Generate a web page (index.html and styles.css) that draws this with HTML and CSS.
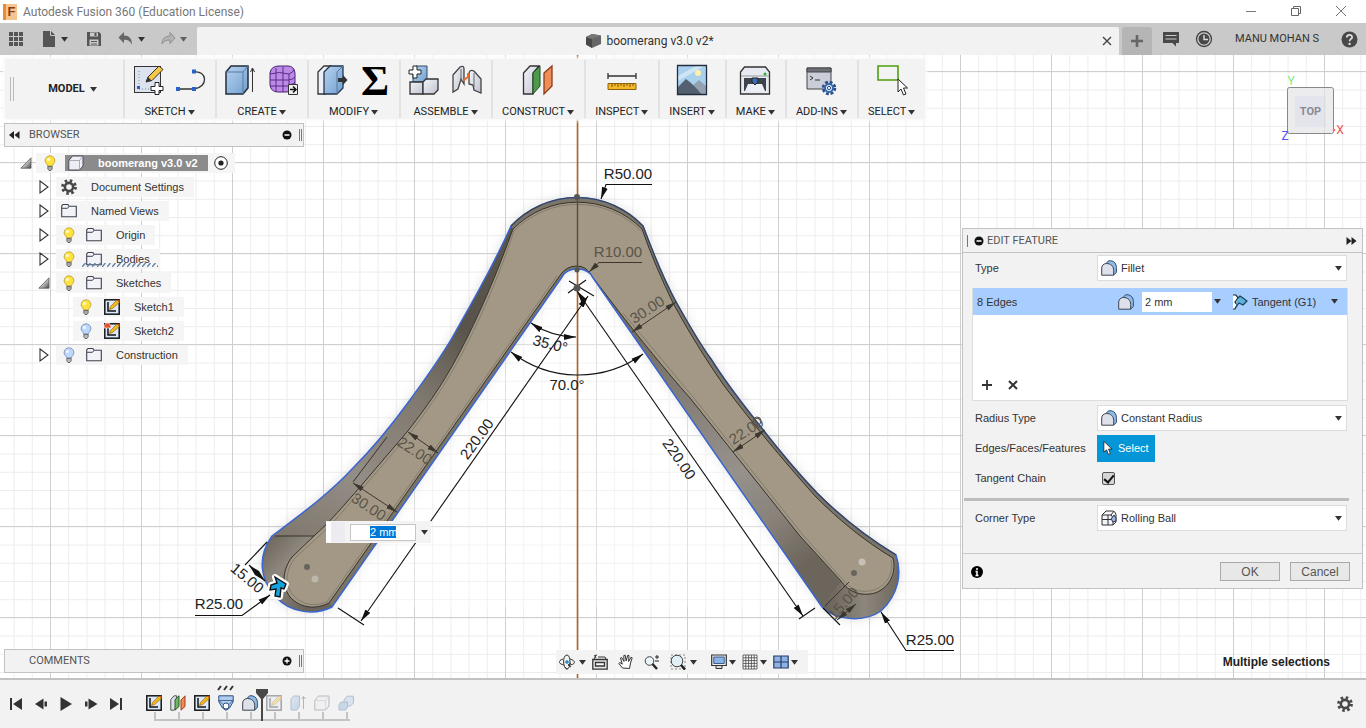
FILE: index.html
```html
<!DOCTYPE html>
<html lang="en">
<head>
<meta charset="utf-8">
<title>Autodesk Fusion 360 (Education License)</title>
<link rel="stylesheet" href="styles.css">
</head>
<body>
<svg class="defs" aria-hidden="true">
  <defs>
    <linearGradient id="blueFace" x1="0" y1="0" x2="1" y2="1"><stop offset="0" stop-color="#b9d3ef"/><stop offset="1" stop-color="#6f9fd0"/></linearGradient>
    <linearGradient id="greyFace" x1="0" y1="0" x2="1" y2="1"><stop offset="0" stop-color="#f4f5f9"/><stop offset="1" stop-color="#bfc3cf"/></linearGradient>
    <linearGradient id="triFill" x1="0" y1="0" x2="1" y2="1"><stop offset="0.3" stop-color="#fff"/><stop offset="1" stop-color="#444"/></linearGradient>
  </defs>
  <symbol id="caret" viewBox="0 0 8 8"><path d="M0 1h8L4 6.500z" fill="#333"/></symbol>
  <symbol id="bulb-on" viewBox="0 0 16 16"><path d="M8 .8a4.900 4.900 0 0 0-4.900 4.900c0 2.300 2.200 3.200 2.500 5.200h4.800c.3-2 2.500-2.900 2.500-5.200A4.900 4.900 0 0 0 8 .8z" fill="#ffe23c" stroke="#b59a3a" stroke-width=".8"/><circle cx="6.500" cy="4.500" r="1.600" fill="#fffbd0"/><path d="M5.800 11.500h4.400v2.300L9 15.500H7l-1.200-1.700z" fill="#aaa" stroke="#555" stroke-width=".8"/></symbol>
  <symbol id="bulb-off" viewBox="0 0 16 16"><path d="M8 .8a4.900 4.900 0 0 0-4.900 4.900c0 2.300 2.200 3.200 2.500 5.200h4.800c.3-2 2.500-2.900 2.500-5.200A4.900 4.900 0 0 0 8 .8z" fill="#bcd7fb" stroke="#6d86b0" stroke-width=".8"/><circle cx="6.500" cy="4.500" r="1.600" fill="#f0f7ff"/><path d="M5.800 11.500h4.400v2.300L9 15.500H7l-1.200-1.700z" fill="#bbb" stroke="#555" stroke-width=".8"/></symbol>
  <symbol id="folder" viewBox="0 0 16 16"><path d="M.7 13.800V3l1.200-1.500h5L8 3.300h7.300v10.500z" fill="#f2f3f8" stroke="#3e4250" stroke-width="1.100"/><path d="M1 5.300h5.500L8 3.500" fill="none" stroke="#3e4250"/></symbol>
  <symbol id="closed" viewBox="0 0 12 14"><path d="M2 1l8 6-8 6z" fill="#fff" stroke="#333" stroke-width="1.100"/></symbol>
  <symbol id="open" viewBox="0 0 12 12"><path d="M11 .8v10.400H.8z" fill="url(#triFill)" stroke="#555" stroke-width=".8"/></symbol>
  <symbol id="sketch" viewBox="0 0 16 16"><rect x=".8" y=".8" width="14.400" height="14.400" fill="#dce8f8" stroke="#151515" stroke-width="1.500"/><path d="M4 3v9h8" fill="none" stroke="#111" stroke-width="1.500"/><path d="M5.500 10.500l1-3L13 1l2.500 2.200-6.800 6.200z" fill="#f2b91e" stroke="#8a5a00" stroke-width=".6"/><path d="M13 1l2.500 2.200.4-2.400z" fill="#d8481e"/></symbol>
  <symbol id="plane" viewBox="0 0 16 16"><path d="M.8 4.500L4 .8h2.600v11L4 15.200H.8z" fill="#dfe2ec" stroke="#444" stroke-width=".9"/><path d="M5 4.500L9 .8v10.700l-4 3.700z" fill="#72b465" stroke="#245b24"/><path d="M11 5l4-4.200v10.700l-4 3.700z" fill="#ee8a55" stroke="#a2411c"/></symbol>
  <symbol id="loft" viewBox="0 0 16 16"><path d="M.8.8h14.400v6L11.500 13 8 15.400 4.500 13 .8 6.800z" fill="#aecdf0" stroke="#304f7c"/><path d="M1 5.500l4 4M15 5.500l-4 4M1 5.500h14" fill="none" stroke="#304f7c" stroke-width=".8"/><circle cx="8" cy="11" r="3" fill="#fff" stroke="#304f7c"/></symbol>
  <symbol id="fillet" viewBox="0 0 16 16"><path d="M5 3.500L7.500.8h2.800C13.500 1.500 15.400 4 15.400 7.500v5L12.700 15z" fill="#8ebbe8" stroke="#334d70"/><path d="M.7 15.200V8C.7 5.500 2.800 3.500 5.500 3.500c4.200 0 7.200 2.800 7.200 7v4.700z" fill="#dfe1ea" stroke="#3e4250"/></symbol>
  <symbol id="box" viewBox="0 0 16 16"><path d="M.8 15V5.500L4.500 1H15v10l-3.500 4z" fill="#edeff5" stroke="#4a4e5a"/><path d="M1 5.500h10.500V15M11.500 5.500L15 1" stroke="#8b90a0" fill="none" stroke-width=".7"/></symbol>
  <symbol id="combine" viewBox="0 0 16 16"><path d="M6 5l3-3.800h6.400V8L12.500 11H6z" fill="#a9c8ec" stroke="#41608d"/><path d="M1 9.500L3 7h6.500v5.500L7.500 15H1z" fill="#7ba3d4" stroke="#41608d"/></symbol>
  <symbol id="extrude" viewBox="0 0 16 16"><path d="M1 15V4l2.500-3h6v10L7 15z" fill="url(#blueFace)" stroke="#41608d"/><path d="M13.500 14V2M11.500 4l2-2.600 2 2.600" fill="none" stroke="#444"/></symbol>
  <symbol id="pointer" viewBox="0 0 12 18"><path d="M1 1v13l3.200-2.800 2.300 5.500 2.400-1-2.300-5.400h4.300z" fill="#fff" stroke="#222"/></symbol>
  <symbol id="gear" viewBox="0 0 16 16"><circle cx="8" cy="8" r="6.400" fill="none" stroke="#484848" stroke-width="3" stroke-dasharray="2.510 2.510"/><circle cx="8" cy="8" r="4.100" fill="none" stroke="#484848" stroke-width="2.600"/></symbol>
</svg>

<header class="titlebar">
  <span class="app-logo">F</span>
  <h1 class="app-title">Autodesk Fusion 360 (Education License)</h1>
  <div class="window-buttons">
    <button aria-label="Minimize"><svg width="12" height="12"><path d="M1 6.500h10" stroke="#777"/></svg></button>
    <button aria-label="Restore"><svg width="12" height="12"><path d="M1.500 3.500h7v7h-7zM3.500 3.500v-2h7v7h-2" fill="none" stroke="#666"/></svg></button>
    <button aria-label="Close"><svg width="12" height="12"><path d="M1 1l10 10M11 1L1 11" stroke="#777"/></svg></button>
  </div>
</header>

<nav class="tabbar">
  <div class="quick">
    <button aria-label="Data panel"><svg width="16" height="16" fill="#555"><path d="M1 1h4v4H1zM6 1h4v4H6zM11 1h4v4h-4zM1 6h4v4H1zM6 6h4v4H6zM11 6h4v4h-4zM1 11h4v4H1zM6 11h4v4H6zM11 11h4v4h-4z"/></svg></button>
    <button class="file" aria-label="File"><svg width="16" height="18"><path d="M2 1h8l4 4v12H2z" fill="#555"/><path d="M9.500 1v4.500H14" fill="none" stroke="#c9c9c9"/></svg><svg class="caret"><use href="#caret"/></svg></button>
    <button class="save" aria-label="Save"><svg width="16" height="16"><path d="M1 1h12l2 2v12H1z" fill="#555"/><path d="M4 1.500h8v4H4zM3.500 8.500h9v6h-9z" fill="#ccc"/><path d="M5 10h6v1H5zM5 12.500h6v1H5zM8.500 2h2v3h-2z" fill="#555"/></svg></button>
    <button class="undo" aria-label="Undo"><svg width="16" height="16"><path d="M6 1v3.500c5 0 8 3 8 9-2-3.500-4-4.800-8-4.800v3.600L.5 6.500z" fill="#666"/></svg><svg class="caret"><use href="#caret"/></svg></button>
    <button class="redo" aria-label="Redo"><svg width="16" height="16"><path d="M10 1.500V5c-5 0-8 3-8 8 2-3 4-4 8-4v3.500L15 7z" fill="#aaa" stroke="#777"/></svg><svg class="caret"><use href="#caret"/></svg></button>
  </div>
  <div class="doc-tab">
    <div class="doc-name"><svg width="17" height="16"><path d="M1 4l6-3 9 1.500v8.500L7 15 1 11.500z" fill="#666"/><path d="M1 4l6 2v9l-6-3.500z" fill="#484848"/><path d="M1 4l6-3 9 1.500L7 6z" fill="#777"/></svg><span>boomerang v3.0 v2*</span></div>
    <button aria-label="Close document"><svg width="10" height="10"><path d="M1 1l8 8M9 1L1 9" stroke="#444" stroke-width="1.400"/></svg></button>
  </div>
  <button class="new-tab" aria-label="New document"><svg width="14" height="14"><path d="M7 1v12M1 7h12" stroke="#666" stroke-width="2.600"/></svg></button>
  <div class="account">
    <button aria-label="Comments"><svg width="18" height="16"><path d="M1 1h16v11h-3v3.500L10.500 12H1z" fill="#484848"/><path d="M3.500 4.500h11M3.500 8h11" stroke="#ccc" stroke-width="1.200"/></svg></button>
    <button aria-label="Job status"><svg width="18" height="18"><circle cx="9" cy="9" r="7.500" fill="#ccc" stroke="#444" stroke-width="1.300"/><circle cx="9" cy="9" r="5.500" fill="#484848"/><path d="M9 5v4.500h4" fill="none" stroke="#ddd" stroke-width="1.400"/></svg></button>
    <button class="user">MANU MOHAN S</button>
    <button aria-label="Help"><svg width="17" height="17"><circle cx="8.500" cy="8.500" r="8" fill="#484848"/><path d="M5.800 6.500c.2-3.600 5.600-3.200 5.300-.2-.2 1.700-2.500 1.700-2.500 4" fill="none" stroke="#ddd" stroke-width="1.800"/><circle cx="8.600" cy="12.900" r="1.200" fill="#ddd"/></svg></button>
  </div>
</nav>

<main class="workspace">
  <svg class="canvas" role="img" aria-label="Boomerang model">
    <defs>
      <pattern id="minor" x="13.600" y="16.400" width="18.200" height="18.200" patternUnits="userSpaceOnUse"><path d="M.5 0v18.200M0 .5h18.200" stroke="#ececec" fill="none"/></pattern>
      <pattern id="major" x="50" y="16" width="91" height="91" patternUnits="userSpaceOnUse"><path d="M.5 0v91M0 .5h91" stroke="#cfcfcf" fill="none"/></pattern>
      <linearGradient id="sideL" gradientUnits="userSpaceOnUse" x1="300" y1="560" x2="470" y2="330"><stop offset="0" stop-color="#7c766b"/><stop offset=".35" stop-color="#948d86"/><stop offset=".7" stop-color="#7f796f"/><stop offset="1" stop-color="#59544b"/></linearGradient>
      <linearGradient id="sideR" gradientUnits="userSpaceOnUse" x1="640" y1="340" x2="840" y2="600"><stop offset="0" stop-color="#756f65"/><stop offset=".5" stop-color="#96918b"/><stop offset=".68" stop-color="#88827a"/><stop offset=".85" stop-color="#6b655b"/></linearGradient>
      <linearGradient id="tipL" x1="0" y1="0" x2="1" y2="1"><stop offset="0" stop-color="#655f55"/><stop offset=".35" stop-color="#8e877d"/><stop offset=".8" stop-color="#6a645a"/></linearGradient>
      <linearGradient id="tipR" x1="0" y1="0" x2="1" y2="0"><stop offset="0" stop-color="#655f55"/><stop offset=".55" stop-color="#8c867d"/><stop offset="1" stop-color="#6e685f"/></linearGradient>
      <filter id="glow" x="-10%" y="-10%" width="120%" height="120%"><feGaussianBlur stdDeviation="6"/></filter>
      <marker id="arr" viewBox="0 0 12 6" refX="12" refY="3" markerWidth="12" markerHeight="7" markerUnits="userSpaceOnUse" orient="auto-start-reverse"><path d="M0 0l12 3L0 6z" fill="#111"/></marker>
      <marker id="arrd" viewBox="0 0 12 6" refX="12" refY="3" markerWidth="11" markerHeight="7" markerUnits="userSpaceOnUse" orient="auto-start-reverse"><path d="M0 0l12 3L0 6z" fill="#3b372f"/></marker>
      <path id="body" d="M511 226A90.700 90.700 0 0 1 643 226C652 250 661 274 675 300C690 327 702 347 711 359C728 386 741 402 757 422C777 448 797 472 817 493C842 518 868 538 896 555C902 573 899 594 881 611C862 624 834 619 822 607L593 278Q589 269 577 269Q566 269 562 277L332 607C316 615 291 614 276 597C260 580 257 557 272 536C300 515 329 494 353 468C377 444 394 422 410 400C428 375 445 352 457 329C480 289 499 253 511 226z"/>
    </defs>
    <rect width="100%" height="100%" fill="url(#minor)"/>
    <rect width="100%" height="100%" fill="url(#major)"/>
    <g transform="translate(0 -55)">
      <use href="#body" fill="#999" opacity=".35" filter="url(#glow)"/>
      <path d="M562 277L332 607H822L593 278Q589 269 577 269Q566 269 562 277z" fill="#fff" opacity=".35"/>
      <path d="M577.500 55v640" stroke="#b3641f" stroke-width="1.600"/>
      <use href="#body" fill="#7b7568"/>
      <path d="M511 226C499 253 480 289 457 329C445 352 428 375 410 400C394 422 377 444 353 468C329 494 300 515 272 536L315 535C330 522 345 504 360 487L407 432C432 400 447 378 467 338C485 302 500 265 513 229z" fill="url(#sideL)"/>
      <path d="M272 536C257 557 260 580 276 597C291 614 316 615 332 607L330 603C315 610 300 608 290 597C280 583 284 567 292 557L318 535z" fill="url(#tipL)"/>
      <path d="M593 278L822 607L841 582L800 536L733 452L690 398L635 333z" fill="url(#sideR)"/>
      <path d="M822 607C834 619 862 624 881 611C899 594 902 573 896 555C900 575 888 590 872 594C858 597 848 592 841 582z" fill="url(#tipR)"/>
      <path d="M513 229A91 91 0 0 1 642 229C651 255 662 280 673 303C689 332 704 357 725 387C751 421 780 457 816 497C840 521 866 542 893 558C897 573 889 588 875 593C860 597 848 591 841 581L800 536L733 452L690 398C665 370 638 336 620 313L591 275Q586 266 577 266Q567 266 561 274L329 603C315 610 300 608 290 597C280 583 284 568 292 557L315 535C330 522 345 504 360 487L407 432C432 400 447 378 467 338C485 302 500 265 513 229z" fill="#a29885" stroke="#37332c"/>
      <g fill="none" stroke="#37332c">
        <path d="M514 231A89 89 0 0 1 641 231M803 535L736 451L693 397L623 313M557 276L327 602C313 607 302 605 293 595C283 583 287 569 295 558L318 537C334 523 348 505 362 489L410 433C435 400 450 378 469 340C487 304 502 267 514 231M891 560C894 573 887 585 874 590C860 594 850 589 843 580L803 535" stroke="#7b7466" stroke-width=".8"/>
        <path d="M275 536h39M387 437L353 482"/>
        <path d="M577.500 197v72" stroke="#5b4b37" stroke-width="1.400"/>
      </g>
      <use href="#body" fill="none" stroke="#3a66d2" stroke-width="1.500"/>
      <path d="M511 226A90.700 90.700 0 0 1 643 226C652 250 661 274 675 300C690 327 702 347 711 359C728 386 741 402 757 422C777 448 797 472 817 493C842 518 868 538 896 555" fill="none" stroke="#3d424d" stroke-width="1.200"/>
      <g stroke="#111" fill="none" stroke-width="1.100">
        <path d="M652 184.500h-46L601 199" marker-end="url(#arr)"/>
        <path d="M195 615.500h47L270 595" marker-end="url(#arr)"/>
        <path d="M954 650.500h-48L881 612" marker-end="url(#arr)"/>
        <path d="M588 296L361 621" marker-start="url(#arr)" marker-end="url(#arr)"/>
        <path d="M338 608l26 17M569 281l25 15M568 293l18-13"/>
        <path d="M577 291L803 616" marker-start="url(#arr)" marker-end="url(#arr)"/>
        <path d="M799 619l16-11M823 608l17 17"/>
        <path d="M531 323Q552 337 576 337" marker-start="url(#arr)" marker-end="url(#arr)"/>
        <path d="M511 352A110 110 0 0 0 643 354" marker-start="url(#arr)" marker-end="url(#arr)"/>
        <path d="M249 565L265 581" marker-start="url(#arr)" marker-end="url(#arr)"/>
        <path d="M267 542L245 565"/>
      </g>
      <g stroke="#3b372f" fill="none">
        <path d="M642 262.500h-43L589 272" marker-end="url(#arrd)"/>
        <path d="M632 332L676 302" marker-start="url(#arrd)" marker-end="url(#arrd)"/>
        <path d="M733 452L765 430" marker-start="url(#arrd)" marker-end="url(#arrd)"/>
        <path d="M408 432L438 453" marker-start="url(#arrd)" marker-end="url(#arrd)"/>
        <path d="M353 483L397 512" marker-start="url(#arrd)" marker-end="url(#arrd)"/>
        <path d="M837 620L856 604" marker-start="url(#arrd)" marker-end="url(#arrd)"/>
        <path d="M825 606L849 582"/>
      </g>
      <g class="dim">
        <text x="628" y="179">R50.00</text>
        <text x="219" y="609">R25.00</text>
        <text x="930" y="645">R25.00</text>
        <text x="567" y="390">70.0°</text>
        <text transform="translate(549 349) rotate(14)">35.0°</text>
        <text transform="translate(481 442) rotate(-54)">220.00</text>
        <text transform="translate(675 462) rotate(55)">220.00</text>
        <text transform="translate(244 582) rotate(40)">15.00</text>
      </g>
      <g class="dim dim-in">
        <text x="618" y="257">R10.00</text>
        <text transform="translate(650 314) rotate(-33)">30.00</text>
        <text transform="translate(749 435) rotate(-33)">22.00</text>
        <text transform="translate(412 455) rotate(33)">22.00</text>
        <text transform="translate(366 511) rotate(33)">30.00</text>
        <text transform="translate(847 607) rotate(-48)">15.00</text>
      </g>
      <g fill="#555"><circle cx="577" cy="197" r="3"/><circle cx="577" cy="270" r="2.500"/><circle cx="577" cy="288" r="3.500"/><circle cx="307" cy="567" r="3" fill="#66645d"/><circle cx="854" cy="573" r="3" fill="#66645d"/><circle cx="315" cy="579" r="3.500" fill="#bbb7ac"/><circle cx="862" cy="562" r="3.500" fill="#c5c1b6"/><circle cx="757" cy="421" r="4" fill="none" stroke="#555"/></g>
      <path id="handle" d="M275 577L286 584L284 589L281 588L280 597L275 596L276 589L270 590L271 585L277 583z" fill="#12a2dc" stroke="#fff" stroke-width="6" stroke-linejoin="round"/>
      <path d="M275 577L286 584L284 589L281 588L280 597L275 596L276 589L270 590L271 585L277 583z" fill="#12a2dc" stroke="#111" stroke-width="1.400"/>
    </g>
  </svg>

  <section class="toolbar">
    <div class="grip"></div>
    <button class="mode">MODEL <svg class="caret"><use href="#caret"/></svg></button>
    <div class="group wide"><div class="icons">
      <svg viewBox="0 0 32 32"><rect x="2.500" y="2.500" width="26" height="26" fill="#dde3ee" stroke="#333"/><path d="M7 7v18h17" stroke="#889" stroke-dasharray="1 2" fill="none"/><path d="M5 22h3v3H5z" fill="#2c5fc2"/><path d="M14 18l2-5L27 2l4 3.500-11 11z" fill="#f6c744" stroke="#333"/><path d="M14 18l2-5 3.500 3.500z" fill="#333"/><path d="M23 18.500h4v4h4v4h-4v4h-4v-4h-4v-4h4z" fill="#fff" stroke="#222"/></svg>
      <svg viewBox="0 0 32 32"><path d="M3 25h16M19 8c13-2 15 15 0 17" fill="none" stroke="#333" stroke-width="1.300"/><path d="M1 23h4v4H1zM17 23h4v4h-4zM17 5.500h4v4h-4z" fill="#2463c9"/></svg>
    </div><button>SKETCH <svg class="caret"><use href="#caret"/></svg></button></div>
    <div class="group wide"><div class="icons">
      <svg viewBox="0 0 32 32"><path d="M2 8l5-6h17v22l-5 6H2z" fill="url(#blueFace)" stroke="#222c3c" stroke-width="1.500"/><path d="M2 8h17v22M19 8l5-6" fill="none" stroke="#5878a0"/><path d="M28.500 28V4M26.500 8l2-4 2 4" fill="none" stroke="#333"/></svg>
      <svg viewBox="0 0 32 32"><path d="M3 9Q4 2 12 2h9q6 0 7 7v13q-2 6-9 6h-8q-7 0-8-7z" fill="#bd8ae8" stroke="#46216e"/><path d="M3 10Q12 7 22 10M3 16h19M3 22h19M9 4v24M16 3v25M22 10v18M22 10q5-2 5-5M22 16q5-1 6-3M22 21q5-1 6-3" fill="none" stroke="#5a2d8a"/><path d="M21.500 20.500h9v10h-9z" fill="#eee" stroke="#333"/><path d="M23 25.500h6M26 22.500l3 3-3 3" stroke="#111" stroke-width="1.500" fill="none"/></svg>
    </div><button>CREATE <svg class="caret"><use href="#caret"/></svg></button></div>
    <div class="group wide"><div class="icons">
      <svg viewBox="0 0 32 32"><path d="M2 8l6-6h7v22l-6 6H2z" fill="#edf1f7" stroke="#333" stroke-width="1.300"/><path d="M8 8l6-6h13v22l-6 6H8z" fill="url(#blueFace)" stroke="#25364d" stroke-width="1.300"/><path d="M21 8v22M21 8l6-6" stroke="#5878a0"/><path d="M22 14h5v-3l4.500 5-4.500 5v-3h-5z" fill="#333"/></svg>
      <span class="sigma">Σ</span>
    </div><button>MODIFY <svg class="caret"><use href="#caret"/></svg></button></div>
    <div class="group wide"><div class="icons">
      <svg viewBox="0 0 32 32"><path d="M5 18V5l3-3h11v13l-3 3z" fill="url(#blueFace)" stroke="#2d486d"/><path d="M2 18h13v12H2z" fill="url(#greyFace)" stroke="#333" stroke-width="1.300"/><path d="M15 18l3-3h12v11l-4 4H15z" fill="url(#greyFace)" stroke="#333" stroke-width="1.300"/><path d="M5 2h4v4h4v4H9v4H5v-4H1V6h4z" fill="#fff" stroke="#222"/></svg>
      <svg viewBox="0 0 32 32"><path d="M2 11l7-8q4-2 4 2v15l-3-5-3 10-5 3z" fill="url(#greyFace)" stroke="#444" stroke-width="1.300"/><path d="M30 15l-7-8q-5-2-5 3v10l4 1 1 5 7 3z" fill="url(#greyFace)" stroke="#444" stroke-width="1.300"/><path d="M23 9v14M10 5v13" stroke="#666"/><path d="M12 17l6-5M17 13v-4" stroke="#ec6b28" stroke-width="2"/></svg>
    </div><button>ASSEMBLE <svg class="caret"><use href="#caret"/></svg></button></div>
    <div class="group"><div class="icons">
      <svg viewBox="0 0 32 32"><path d="M1.500 9L8 2h9l-6 7v21H1.500z" fill="url(#greyFace)" stroke="#333" stroke-width="1.300"/><path d="M11 9l7-7v20l-7 8z" fill="#4b9b4b" stroke="#234b23"/><path d="M22 9l8-7v20l-8 8z" fill="#ef8d58" stroke="#8b3c18" stroke-width="1.300"/></svg>
    </div><button>CONSTRUCT <svg class="caret"><use href="#caret"/></svg></button></div>
    <div class="group"><div class="icons">
      <svg viewBox="0 0 32 32"><path d="M2 12h28M2 9v6M30 9v6" stroke="#333" stroke-width="1.300"/><path d="M2 19.500h28v6H2z" fill="#f5b829" stroke="#8d6210"/><path d="M6 20v3M9 20v2M12 20v3M15 20v2M18 20v3M21 20v2M24 20v3M27 20v2" stroke="#7a5408"/></svg>
    </div><button>INSPECT <svg class="caret"><use href="#caret"/></svg></button></div>
    <div class="group"><div class="icons">
      <svg viewBox="0 0 32 32"><path d="M1.500 1.500h29v29h-29z" fill="#a9d1ee"/><path d="M2 12L20 2h8L2 17z" fill="#cfe6f6"/><circle cx="22" cy="9" r="3" fill="#fff1a6"/><path d="M15 23l8-7 7 6v8H12z" fill="#93a1b2"/><path d="M2 23l8-8 5 4 7 7 3 4H2z" fill="#53606f"/><path d="M1.500 1.500h29v29h-29z" fill="none" stroke="#222d40" stroke-width="1.300"/></svg>
    </div><button>INSERT <svg class="caret"><use href="#caret"/></svg></button></div>
    <div class="group"><div class="icons">
      <svg viewBox="0 0 32 32"><path d="M1.500 8l4-5h21l4 5v22h-29z" fill="#e8eaf1" stroke="#333" stroke-width="1.300"/><path d="M2 12h28" stroke="#999"/><path d="M5 14h22v13H5z" fill="#3e444d"/><path d="M9 20h14l3 7H6z" fill="#edf1f7"/><path d="M13 14h6v4l-3 3-3-3z" fill="#396eb7" stroke="#222"/><circle cx="26" cy="10" r="1.500" fill="#25af32"/></svg>
    </div><button>MAKE <svg class="caret"><use href="#caret"/></svg></button></div>
    <div class="group"><div class="icons">
      <svg viewBox="0 0 32 32"><path d="M2 4h24v21H2z" fill="#c9ced9" stroke="#444"/><path d="M2 4h24v4H2z" fill="#6c7078" stroke="#444"/><path d="M5 12l3 2-3 2M10 16h5" stroke="#333" fill="none"/><circle cx="24" cy="24" r="5.500" fill="none" stroke="#274e89" stroke-width="3.500" stroke-dasharray="2.600 1.720"/><circle cx="24" cy="24" r="4" fill="#e5effc" stroke="#396aa9" stroke-width="2"/><circle cx="24" cy="24" r="1.600" fill="#fff" stroke="#274e89"/></svg>
    </div><button>ADD-INS <svg class="caret"><use href="#caret"/></svg></button></div>
    <div class="group"><div class="icons">
      <svg viewBox="0 0 32 32"><path d="M2 2h20v14H2z" fill="none" stroke="#4fa00f" stroke-width="1.600"/><path d="M22 15v13l3-3 2.500 6 2.500-1-2.500-6h4z" fill="#fff" stroke="#222"/></svg>
    </div><button>SELECT <svg class="caret"><use href="#caret"/></svg></button></div>
  </section>

  <aside class="browser">
    <header class="bar"><button class="mini" aria-label="Collapse"><svg width="11" height="8"><path d="M5 0v8L0 4zM10.500 0v8l-5-4z" fill="#222"/></svg></button><h2>BROWSER</h2><button class="mini" aria-label="Hide"><svg width="10" height="10"><circle cx="5" cy="5" r="4.500" fill="#111"/><path d="M2.500 5h5" stroke="#fff" stroke-width="1.500"/></svg></button><i class="edge"></i></header>
    <ul class="tree">
      <li class="l0"><svg class="tri open"><use href="#open"/></svg><div class="node"><svg><use href="#bulb-on"/></svg><span class="root"><svg><use href="#box"/></svg>boomerang v3.0 v2</span><svg><circle cx="8" cy="8" r="6.300" fill="#fff" stroke="#222"/><circle cx="8" cy="8" r="2.600" fill="#222"/></svg></div></li>
      <li class="l1"><svg class="tri"><use href="#closed"/></svg><div class="node"><svg><use href="#gear"/></svg><span>Document Settings</span></div></li>
      <li class="l1"><svg class="tri"><use href="#closed"/></svg><div class="node"><svg><use href="#folder"/></svg><span>Named Views</span></div></li>
      <li class="l1"><svg class="tri"><use href="#closed"/></svg><div class="node"><svg><use href="#bulb-on"/></svg><svg class="second"><use href="#folder"/></svg><span>Origin</span></div></li>
      <li class="l1"><svg class="tri"><use href="#closed"/></svg><div class="node hatched"><svg><use href="#bulb-on"/></svg><svg class="second"><use href="#folder"/></svg><span>Bodies</span><svg class="hatch"><defs><pattern id="slant" width="5" height="4" patternUnits="userSpaceOnUse"><path d="M0 4L3.500 0" stroke="#5f7fa6" stroke-width="1.400"/></pattern></defs><rect width="100%" height="4" fill="url(#slant)"/></svg></div></li>
      <li class="l1"><svg class="tri open"><use href="#open"/></svg><div class="node"><svg><use href="#bulb-on"/></svg><svg class="second"><use href="#folder"/></svg><span>Sketches</span></div></li>
      <li class="l2"><div class="node"><svg><use href="#bulb-on"/></svg><svg class="second"><use href="#sketch"/></svg><span>Sketch1</span></div></li>
      <li class="l2"><div class="node"><svg><use href="#bulb-off"/></svg><svg class="second"><use href="#sketch"/><path d="M0 5V3l2-3h3l2 3v2z" fill="#e5502d" stroke="#fff" stroke-width=".6"/></svg><span>Sketch2</span></div></li>
      <li class="l1"><svg class="tri"><use href="#closed"/></svg><div class="node"><svg><use href="#bulb-off"/></svg><svg class="second"><use href="#folder"/></svg><span>Construction</span></div></li>
    </ul>
  </aside>

  <svg class="viewcube" width="66" height="70" role="img" aria-label="View cube: top">
    <rect x="9.500" y="13.500" width="46" height="46" rx="2" fill="#ececef" stroke="#888"/><path d="M17 22h31v31H17z" fill="#e4e4ed"/><path d="M46.500 14v45" stroke="#ddd"/>
    <text x="32.500" y="41" class="cube-face">TOP</text><text x="13" y="11" class="cube-y">Y</text><text x="7" y="66" class="cube-z">Z</text><text x="62" y="60" class="cube-x">X</text><circle cx="56" cy="56" r="1.300" fill="#f66"/>
  </svg>

  <div class="radius-input"><i></i><input aria-label="Radius" value="2 mm" id="radius"><svg class="caret"><use href="#caret"/></svg></div>

  <form class="dialog">
    <header class="bar"><i class="edge"></i><button type="button" class="mini" aria-label="Hide"><svg width="10" height="10"><circle cx="5" cy="5" r="4.500" fill="#111"/><path d="M2.500 5h5" stroke="#fff" stroke-width="1.500"/></svg></button><h2>EDIT FEATURE</h2><button type="button" class="mini" aria-label="Expand"><svg width="11" height="8"><path d="M.5 0v8l5-4zM5.500 0v8l5-4z" fill="#222"/></svg></button></header>
    <div class="row"><label for="type">Type</label><div class="combo"><svg class="ic"><use href="#fillet"/></svg><select id="type"><option>Fillet</option></select><svg class="caret"><use href="#caret"/></svg></div></div>
    <div class="list">
      <div class="list-row"><span class="edges">8 Edges</span><svg class="ic"><use href="#fillet"/></svg><input aria-label="Edge radius" value="2 mm"><svg class="caret"><use href="#caret"/></svg><svg class="ic tangent" viewBox="0 0 16 16"><path d="M1 1h3l2 3-3 4 2 3-2 4H1" fill="#fff" stroke="#222" stroke-width="1.200"/><path d="M5 5l3-3 3 2 4 3-4 4-4-2-3 4" fill="#5db3dc" stroke="#17405c" stroke-width="1.200"/></svg><select aria-label="Continuity"><option>Tangent (G1)</option></select><svg class="caret"><use href="#caret"/></svg></div>
      <div class="list-actions"><button type="button" aria-label="Add"><svg width="12" height="12"><path d="M6 1v10M1 6h10" stroke="#333" stroke-width="1.800"/></svg></button><button type="button" aria-label="Remove"><svg width="12" height="12"><path d="M2 2l8 8M10 2l-8 8" stroke="#333" stroke-width="2"/></svg></button></div>
    </div>
    <div class="row"><label for="rtype">Radius Type</label><div class="combo"><svg class="ic"><use href="#fillet"/></svg><select id="rtype"><option>Constant Radius</option></select><svg class="caret"><use href="#caret"/></svg></div></div>
    <div class="row"><label for="sel">Edges/Faces/Features</label><button type="button" class="select-btn" id="sel"><svg width="10" height="16"><use href="#pointer"/></svg>Select</button></div>
    <div class="row"><label for="chain">Tangent Chain</label><input type="checkbox" id="chain" checked></div>
    <hr>
    <div class="row"><label for="corner">Corner Type</label><div class="combo"><svg class="ic" viewBox="0 0 16 16"><path d="M1 15V5l4-4h7q3 1 3 4v7l-3 3z" fill="#f4f5f9" stroke="#333"/><path d="M1 5h9q2 2 2 4v6M1 9.500h9M7 5v10M10 5l3-4" fill="none" stroke="#333"/><path d="M10 9l3-4 2 3v3l-3 1z" fill="#96b3df" stroke="#335"/></svg><select id="corner"><option>Rolling Ball</option></select><svg class="caret"><use href="#caret"/></svg></div></div>
    <footer><button type="button" class="mini" aria-label="Information"><svg width="12" height="12"><circle cx="6" cy="6" r="6" fill="#000"/><path d="M6 2v2M4.500 5.500H6V9M4.500 9.500h3" stroke="#fff" stroke-width="1.500" fill="none"/></svg></button><button type="button" class="push">OK</button><button type="button" class="push">Cancel</button></footer>
  </form>

  <section class="comments bar"><h2>COMMENTS</h2><button class="mini" aria-label="Expand comments"><svg width="10" height="10"><circle cx="5" cy="5" r="4.500" fill="#111"/><path d="M2.500 5h5M5 2.500v5" stroke="#fff" stroke-width="1.300"/></svg></button><i class="edge"></i></section>

  <nav class="navbar">
    <button class="orbit" aria-label="Orbit"><svg class="ic" viewBox="0 0 16 16"><path d="M8 1c-5 0-4 14 0 14s4-14 0-14zM4 5C-2 7 0 10 5 11M11 5c7 2 5 6-1 6M12 9l-3 2 3 2M6 13l2 2.500" fill="none" stroke="#333"/><path d="M6 8h4M8 6v4" stroke="#1f86cc" stroke-width="1.300"/></svg><svg class="caret"><use href="#caret"/></svg></button>
    <button aria-label="Look at"><svg class="ic" viewBox="0 0 16 16"><path d="M.8 5.500h14.400v9.700H.8z" fill="#e8e8ec" stroke="#333" stroke-width="1.300"/><path d="M3.500 8.500h9v3.500h-9z" fill="#fff" stroke="#333" stroke-width="1.300"/><path d="M2 5l2-3.500M14 5l-1-2H6M5 1L2.500 1.500 4 4" fill="none" stroke="#333"/></svg></button>
    <button aria-label="Pan"><svg class="ic" viewBox="0 0 16 16"><path d="M4.500 14L.8 9.500 2 8.500l2.300 1.700L2.500 4l1.200-.5L6 7.500 5.800 1.500 7.200 1.200 8.200 7 9.700 1.300l1.300.3L10.600 7.500l2.500-4.300 1.100.6-1.700 5.200-1 5.500z" fill="#fff" stroke="#333"/></svg></button>
    <button aria-label="Zoom"><svg class="ic" viewBox="0 0 16 16"><circle cx="5.500" cy="7" r="4.300" fill="#e9f5f8" stroke="#444"/><path d="M8.500 10l4.500 5" stroke="#222" stroke-width="2.400"/><path d="M11 3h4M13 1v4M11 7h4" stroke="#222"/></svg></button>
    <button aria-label="Fit"><svg class="ic" viewBox="0 0 16 16"><path d="M1 1h14v14H1z" fill="none" stroke="#888" stroke-dasharray="2 2"/><circle cx="7" cy="7" r="5.800" fill="#e0f0f5" stroke="#444"/><path d="M11 11l4 4.500" stroke="#222" stroke-width="2.600"/></svg><svg class="caret"><use href="#caret"/></svg></button>
    <button class="sep" aria-label="Display settings"><svg class="ic" viewBox="0 0 16 16"><path d="M.7 1h14.600v10.500H.7z" fill="#eee" stroke="#333" stroke-width="1.200"/><path d="M2.800 3h10.400v6.500H2.800z" fill="#8db4e6" stroke="#3b5f94"/><path d="M5 12v2.500h6V12" fill="#ddd" stroke="#333"/></svg><svg class="caret"><use href="#caret"/></svg></button>
    <button aria-label="Grid settings"><svg class="ic" viewBox="0 0 16 16"><path d="M1 1h14v14H1zM3.800 1v14M6.600 1v14M9.400 1v14M12.200 1v14M1 3.800h14M1 6.600h14M1 9.400h14M1 12.200h14" fill="#fff" stroke="#444" stroke-width=".8"/></svg><svg class="caret"><use href="#caret"/></svg></button>
    <button aria-label="Viewports"><svg class="ic" viewBox="0 0 16 16"><path d="M.8 2h14.400v12H.8zM8 2v12M.8 8h14.400" fill="#8fb2e3" stroke="#263f68" stroke-width="1.200"/></svg><svg class="caret"><use href="#caret"/></svg></button>
  </nav>
  <p class="status">Multiple selections</p>
</main>

<footer class="timeline">
  <div class="playback">
    <button aria-label="First"><svg width="14" height="14"><path d="M2 1v12" stroke="#333" stroke-width="2"/><path d="M13 1v12L4 7z" fill="#333"/></svg></button>
    <button aria-label="Previous"><svg width="14" height="14"><path d="M9.500 1.500v11L1 7zM10.500 4.500h2.500v5h-2.500z" fill="#333"/></svg></button>
    <button aria-label="Play"><svg width="14" height="14"><path d="M1.500 0v14L13 7z" fill="#333"/></svg></button>
    <button aria-label="Next"><svg width="14" height="14"><path d="M4.500 1.500v11L13.500 7zM1 4.500h2.500v5H1z" fill="#333"/></svg></button>
    <button aria-label="Last"><svg width="14" height="14"><path d="M12 1v12" stroke="#333" stroke-width="2"/><path d="M1 1v12l9-6z" fill="#333"/></svg></button>
  </div>
  <div class="features">
    <button aria-label="Sketch1"><svg><use href="#sketch"/></svg></button>
    <button aria-label="Plane1"><svg><use href="#plane"/></svg></button>
    <button aria-label="Sketch2"><svg><use href="#sketch"/></svg></button>
    <button aria-label="Loft1"><svg><use href="#loft"/><path d="M0 -5L3 -9M6 -5L9 -9M12 -5L15 -9" stroke="#333" stroke-width="2"/></svg></button>
    <button aria-label="Fillet1"><svg><use href="#fillet"/></svg></button>
    <button class="dimmed" aria-label="Sketch3"><svg><use href="#sketch"/></svg></button>
    <button class="dimmed" aria-label="Extrude1"><svg><use href="#extrude"/></svg></button>
    <button class="dimmed" aria-label="Body1"><svg><use href="#box"/></svg></button>
    <button class="dimmed" aria-label="Combine1"><svg><use href="#combine"/></svg></button>
    <svg class="marker" width="12" height="32"><path d="M0 0h12v4L7 10v22H5V10L0 4z" fill="#484848"/></svg>
  </div>
  <button class="settings" aria-label="Timeline settings"><svg width="16" height="16"><use href="#gear"/></svg></button>
</footer>
<script src="main.js"></script>
</body>
</html>
```

FILE: styles.css
```css
* { box-sizing: border-box; }
body { margin: 0; height: 100vh; min-height: 640px; display: flex; flex-direction: column; overflow: hidden; background: #fff; color: #333; font: 11px/16px "Liberation Sans", Arial, sans-serif; }
button, input, select { font: inherit; color: inherit; }
button { border: 0; padding: 0; background: none; display: inline-flex; align-items: center; justify-content: center; }
svg { display: block; flex: none; }
h1, h2, p, ul { margin: 0; padding: 0; font-size: inherit; font-weight: normal; }
.defs { position: absolute; width: 0; height: 0; }
.caret { width: 7px; height: 7px; }
.ic { width: 16px; height: 16px; }

.titlebar { height: 23px; flex: none; display: flex; align-items: center; padding: 0 19px 0 3px; }
.app-logo { width: 14px; height: 16px; background: #f7c491; border-left: 3px solid #e98a35; color: #8a3c0c; font: bold 13px/16px "Liberation Sans", sans-serif; text-align: center; }
.app-title { flex: 1; margin-left: 6px; color: #777; font: 12px/16px Roboto, sans-serif; }
.window-buttons { display: flex; gap: 33px; padding-bottom: 2px; }

.tabbar { height: 32px; flex: none; display: flex; align-items: flex-end; background: #c9c9c9; }
.quick { width: 197px; height: 32px; display: flex; align-items: center; padding-left: 8px; }
.quick button { gap: 4px; }
.file { margin-left: 17px; }
.save { margin-left: 18px; }
.undo { margin-left: 16px; }
.redo { margin-left: 15px; opacity: 0.7; }
.doc-tab { flex: 1; height: 28px; display: flex; align-items: center; padding-right: 7px; background: #f2f2f2; border-radius: 2px 2px 0 0; }
.doc-name { flex: 1; display: flex; justify-content: center; align-items: center; gap: 4px; font: 12px/16px Roboto, sans-serif; }
.new-tab { width: 30px; height: 28px; margin-left: 3px; background: #b5b5b5; border-radius: 3px 3px 0 0; }
.account { height: 32px; display: flex; align-items: center; gap: 15px; padding: 0 8px 0 10px; }
.user { margin: 0 7px; font: 11px/16px Roboto, sans-serif; }

.workspace { flex: 1; position: relative; overflow: hidden; background: #fff; }
.canvas { position: absolute; inset: 0; width: 100%; height: 100%; }
.dim { font: 15px "Liberation Sans", Arial, sans-serif; fill: #222; text-anchor: middle; }
.dim-in { fill: #5a5449; }

.toolbar { position: absolute; top: 4px; left: 5px; height: 60px; display: flex; background: #f3f3f3; box-shadow: 0 0 3px 2px #fafafa; }
.grip { width: 4px; height: 24px; margin: 18px 0 0 5px; border: solid #bbb; border-width: 0 1px; }
.mode { width: 109px; font: bold 11px/16px Roboto, sans-serif; gap: 5px; padding-left: 8px; color: #222; }
.group { padding: 4px 10px 0 9px; border-left: 2px solid #e2e2e2; margin: 1px 0; display: flex; flex-direction: column; align-items: center; }
.wide { width: 92px; padding: 4px 9px 0 8px; }
.icons { display: flex; gap: 11px; height: 32px; }
.icons svg { width: 32px; height: 32px; }
.group button { margin-top: 8px; gap: 2px; font: 11px/16px Roboto, sans-serif; white-space: nowrap; color: #222; }
.sigma { width: 32px; font: bold 43px/34px "Liberation Serif", serif; color: #000; text-align: center; }

.bar { height: 24px; display: flex; align-items: center; background: #f2f2f2; border: 1px solid #c2c2c2; font: 11px/16px Roboto, sans-serif; color: #555; }
.bar h2 { flex: 1; }
.edge { width: 3px; height: 12px; border: solid #777; border-width: 0 1px; }
.browser { position: absolute; top: 68px; left: 4px; width: 300px; }
.browser .bar { padding: 0 1px 0 4px; }
.browser h2 { margin-left: 9px; }
.bar .edge { margin-left: 7px; }
.tree { list-style: none; padding-top: 4px; }
.tree li { height: 24px; display: flex; align-items: center; }
.tree svg { width: 16px; height: 16px; overflow: visible; }
.l0 { padding-left: 16px; }
.l1 { padding-left: 34px; }
.l2 { padding-left: 69px; }
.tree .tri { width: 12px; height: 14px; margin-right: 4px; }
.tree .tri.open { height: 12px; }
.l1 .tri { margin-right: 6px; }
.node { height: 20px; display: flex; align-items: center; padding: 0 10px 0 5px; background: #f5f5f5; }
.l0 .node { padding: 0 6px; }
.node > span { margin-left: 14px; }
.node .second { margin-left: 9px; }
.l2 .second { margin-left: 10px; }
.node .root { height: 16px; display: flex; align-items: center; gap: 14px; margin: 0 5px 0 7px; padding: 0 10px 0 3px; background: #8b8b8b; color: #fff; font-weight: bold; }
.hatched { position: relative; }
.tree .hatch { position: absolute; left: 26px; bottom: 2px; width: 76px; height: 4px; }

.viewcube { position: absolute; top: 19px; right: 22px; overflow: visible; }
.viewcube text { font: 12px Roboto, sans-serif; text-anchor: middle; }
.viewcube .cube-face { font-size: 11px; font-weight: bold; fill: #8a8a94; }
.cube-y { fill: #7de87d; }
.cube-z { fill: #5555f0; }
.cube-x { fill: #f05555; }

.radius-input { position: absolute; left: 326px; top: 466px; height: 22px; display: flex; align-items: center; background: #f3f3f3; gap: 5px; padding-right: 3px; }
.radius-input i { width: 19px; height: 20px; background: #ececf0; border-left: 5px solid #fff; }
.radius-input input { width: 66px; height: 17px; padding: 0 19px; border: 1px solid #c5c5c5; background: #fff; outline: 0; }
.radius-input input::selection { background: #0078d7; color: #fff; }

.dialog { position: absolute; top: 173px; right: 3px; width: 401px; padding-bottom: 7px; background: #f2f2f2; border: 1px solid #c2c2c2; }
.dialog .bar { border-width: 0 0 1px; padding: 0 5px 0 2px; }
.dialog .bar .edge { margin: 0 6px 0 0; border-left: 0; }
.dialog .bar h2 { margin-left: 3px; }
.row { height: 30px; display: flex; align-items: center; padding: 0 15px 0 12px; }
.row label { width: 122px; }
.combo { flex: 1; height: 26px; display: flex; align-items: center; gap: 4px; padding: 0 4px 0 3px; background: #fff; border: 1px solid #dcdcdc; }
.dialog select { flex: 1; min-width: 0; height: 20px; padding: 0; border: 0; background: none; appearance: none; outline: 0; }
.list { margin: 5px 14px 2px 9px; height: 113px; display: flex; flex-direction: column; justify-content: space-between; background: #fff; border: 1px solid #ddd; border-top: 0; }
.list-row { height: 27px; display: flex; align-items: center; padding: 0 9px 0 4px; background: #a8ceff; }
.edges { width: 141px; }
.list-row input { width: 70px; height: 20px; margin: 0 2px 0 8px; padding: 0 3px; border: 0; }
.tangent { margin: 0 4px 0 11px; }
.list-actions { display: flex; gap: 14px; padding: 0 8px 9px; }
.select-btn { height: 27px; padding: 0 6px; gap: 5px; background: #0696d7; color: #fff; }
.row input[type="checkbox"] { appearance: none; width: 13px; height: 13px; margin: 0 0 0 5px; border: 1px solid #555; border-radius: 2px; background: #d5d5d5; position: relative; }
.row input[type="checkbox"]:checked::after { content: ""; position: absolute; left: 3px; top: 0; width: 4px; height: 8px; border: solid #111; border-width: 0 2px 2px 0; transform: rotate(40deg); }
.dialog hr { height: 3px; margin: 5px 13px 2px 1px; border: 0; background: #bdbdbd; }
.dialog footer { display: flex; align-items: center; gap: 10px; margin-top: 20px; padding: 8px 12px 0 8px; border-top: 1px solid #c8c8c8; }
.dialog footer .mini { margin-right: auto; }
.push { width: 60px; height: 19px; border: 1px solid #a9a9a9; background: #e8e8e8; color: #555; font-size: 12px; }

.comments { position: absolute; left: 4px; bottom: 5px; width: 300px; padding: 0 1px 0 24px; }
.navbar { position: absolute; left: 556px; bottom: 4px; height: 24px; display: flex; align-items: center; gap: 10px; padding: 0 10px 0 3px; background: #f3f3f3; }
.navbar button { gap: 4px; }
.navbar .orbit { margin-right: -4px; }
.navbar button + .sep { margin-left: 4px; }
.navbar .sep ~ button { margin-left: -4px; }
.navbar .sep, .navbar .sep ~ button { gap: 2px; }
.status { position: absolute; right: 36px; bottom: 8px; font-size: 12px; font-weight: bold; color: #222; }

.timeline { height: 50px; flex: none; display: flex; align-items: flex-start; padding: 14px 13px 0 9px; background: #f2f2f2; border-top: 2px solid #c2c2c2; }
.playback { display: flex; gap: 11px; height: 20px; align-items: center; margin-right: 19px; }
.features { display: flex; position: relative; height: 27px; }
.features button { width: 24px; height: 27px; align-items: flex-start; padding-top: 1px; position: relative; }
.features button svg { width: 16px; height: 16px; overflow: visible; }
.features button::after { content: ""; position: absolute; left: 12px; bottom: 0; width: 24px; height: 7px; border: solid #c4c4c4; border-width: 0 0 2px 2px; }
.features button:nth-of-type(9)::after { width: 2px; }
.features .dimmed svg { opacity: 0.35; }
.marker { position: absolute; left: 114px; top: -5px; }
.settings { margin-left: auto; margin-top: 2px; }
```

FILE: main.js
```js
const radius = document.getElementById("radius");
radius.focus({ preventScroll: true });
radius.select();
```
